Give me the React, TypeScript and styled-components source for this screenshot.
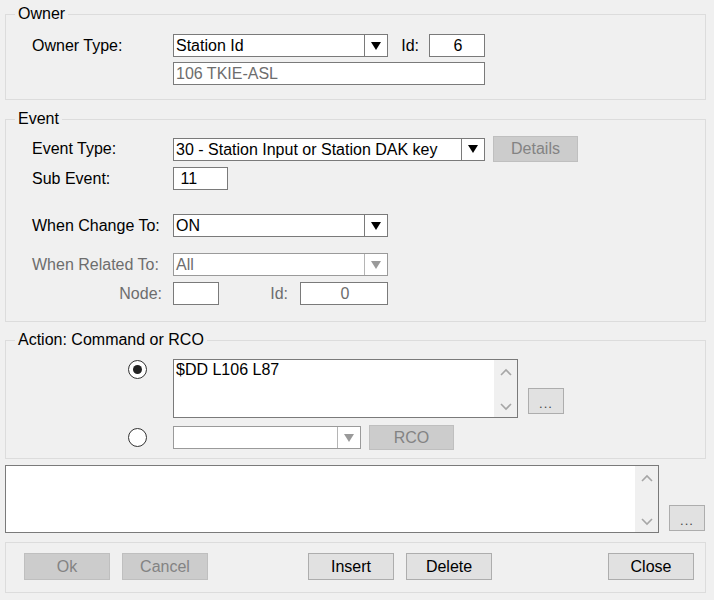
import React from "react";
import styled, { createGlobalStyle } from "styled-components";

const GlobalStyle = createGlobalStyle`
  html, body {
    margin: 0;
    background: #f0f0f0;
  }
  body {
    font-family: "Liberation Sans", Arial, sans-serif;
    font-size: 16px;
    color: #000;
  }
`;

const Window = styled.div`
  width: 701px;
  padding: 6px 0 0 5px;
  display: flex;
  flex-direction: column;
`;

const Group = styled.fieldset<{ $gap?: number }>`
  margin: ${(p) => p.$gap ?? 0}px 0 0 0;
  padding: 0;
  border: 1px solid #dcdcdc;
  min-width: 0;
`;

const GroupBody = styled.div<{ $top: number; $bottom: number }>`
  padding: ${(p) => p.$top}px 0 ${(p) => p.$bottom}px 26px;
  display: flex;
  flex-direction: column;
`;

const Legend = styled.legend`
  margin-left: 9px;
  padding: 0 3px;
  line-height: 16px;
  height: 16px;
`;

const Row = styled.div<{ $gap?: number; $align?: string }>`
  display: flex;
  align-items: ${(p) => p.$align ?? "center"};
  margin-top: ${(p) => p.$gap ?? 0}px;
`;

const Label = styled.span<{ $muted?: boolean; $right?: boolean; $width?: number }>`
  width: ${(p) => p.$width ?? 141}px;
  flex: none;
  box-sizing: border-box;
  color: ${(p) => (p.$muted ? "#6d6d6d" : "#000")};
  text-align: ${(p) => (p.$right ? "right" : "left")};
  padding-right: ${(p) => (p.$right ? 11 : 0)}px;
  white-space: nowrap;
`;

const Combo = styled.div<{ $width: number; $muted?: boolean }>`
  width: ${(p) => p.$width}px;
  height: 23px;
  box-sizing: border-box;
  border: 1px solid ${(p) => (p.$muted ? "#9a9a9a" : "#7a7a7a")};
  background: #fff;
  display: flex;
  color: ${(p) => (p.$muted ? "#6d6d6d" : "#000")};
`;

const ComboText = styled.span`
  flex: 1;
  padding-left: 2px;
  line-height: 21px;
  white-space: nowrap;
  overflow: hidden;
`;

const ComboArrow = styled.span<{ $muted?: boolean }>`
  width: 22px;
  flex: none;
  border-left: 1px solid ${(p) => (p.$muted ? "#b5b5b5" : "#7a7a7a")};
  display: flex;
  align-items: center;
  justify-content: center;
  svg {
    fill: ${(p) => (p.$muted ? "#9a9a9a" : "#000")};
  }
`;

const TextBox = styled.div<{ $width: number; $center?: boolean; $muted?: boolean }>`
  width: ${(p) => p.$width}px;
  height: 23px;
  box-sizing: border-box;
  border: 1px solid #7a7a7a;
  background: #fff;
  line-height: 21px;
  padding-left: 2px;
  text-align: ${(p) => (p.$center ? "center" : "left")};
  color: ${(p) => (p.$muted ? "#6d6d6d" : "#000")};
  flex: none;
`;

const InlineLabel = styled.span<{ $width: number; $muted?: boolean }>`
  width: ${(p) => p.$width}px;
  flex: none;
  box-sizing: border-box;
  text-align: right;
  padding-right: ${(p) => (p.$muted ? 12 : 10)}px;
  color: ${(p) => (p.$muted ? "#6d6d6d" : "#000")};
`;

const Button = styled.button<{ $width?: number; $height?: number; $left?: number }>`
  width: ${(p) => p.$width ?? 86}px;
  height: ${(p) => p.$height ?? 27}px;
  margin-left: ${(p) => p.$left ?? 0}px;
  flex: none;
  box-sizing: border-box;
  border: 1px solid #adadad;
  background: #e1e1e1;
  font-family: inherit;
  font-size: 16px;
  color: #000;
  padding: 0;
  &:disabled {
    background: #cccccc;
    border-color: #bfbfbf;
    color: #838383;
  }
`;

const DotsButton = styled(Button)<{ $bottom: number }>`
  align-self: flex-end;
  margin-bottom: ${(p) => p.$bottom}px;
  font-size: 13px;
  color: #444;
  letter-spacing: 1px;
  line-height: 14px;
  padding-top: 6px;
`;

const RadioSlot = styled.div`
  width: 141px;
  flex: none;
  display: flex;
`;

const Radio = styled.span<{ $checked?: boolean; $top?: number }>`
  width: 19px;
  height: 19px;
  box-sizing: border-box;
  margin: ${(p) => p.$top ?? 0}px 0 0 96px;
  border: 1.5px solid #333;
  border-radius: 50%;
  background: #fff;
  display: flex;
  align-items: center;
  justify-content: center;
  &::after {
    content: "";
    width: 9px;
    height: 9px;
    border-radius: 50%;
    background: ${(p) => (p.$checked ? "#222" : "transparent")};
  }
`;

const Memo = styled.div<{ $width: number; $height: number }>`
  width: ${(p) => p.$width}px;
  height: ${(p) => p.$height}px;
  box-sizing: border-box;
  border: 1px solid #7a7a7a;
  background: #fff;
  display: flex;
  flex: none;
`;

const MemoText = styled.div`
  flex: 1;
  padding: 1px 2px;
  line-height: 18px;
`;

const ScrollStrip = styled.div`
  width: 23px;
  background: #f0f0f0;
  display: flex;
  flex-direction: column;
  justify-content: space-between;
  align-items: center;
  padding: 8px 0 6px;
  svg {
    stroke: #a6a6a6;
    fill: none;
  }
`;

const MemoRow = styled.div`
  display: flex;
  margin-top: 6px;
`;

const ButtonBar = styled.div`
  margin-top: 9px;
  border: 1px solid #dcdcdc;
  padding: 10px 11px 12px 18px;
  display: flex;
  gap: 12px;
`;

const Spacer = styled.div<{ $width?: number }>`
  ${(p) => (p.$width ? `width: ${p.$width - 24}px;` : "flex: 1;")}
`;

const Arrow = () => (
  <svg width="10" height="8" viewBox="0 0 10 8">
    <polygon points="0,0 10,0 5,8" />
  </svg>
);

const DropDown = ({ width, value, muted }: { width: number; value: string; muted?: boolean }) => (
  <Combo $width={width} $muted={muted}>
    <ComboText>{value}</ComboText>
    <ComboArrow $muted={muted}>
      <Arrow />
    </ComboArrow>
  </Combo>
);

const Scroller = () => (
  <ScrollStrip>
    <svg width="12" height="8" viewBox="0 0 12 8">
      <polyline points="1,7 6,2 11,7" strokeWidth="1.6" />
    </svg>
    <svg width="12" height="8" viewBox="0 0 12 8">
      <polyline points="1,1 6,6 11,1" strokeWidth="1.6" />
    </svg>
  </ScrollStrip>
);

const App = () => {
  return (
    <>
      <GlobalStyle />
      <Window>
        <Group>
          <Legend>Owner</Legend>
          <GroupBody $top={12} $bottom={14}>
            <Row>
              <Label>Owner Type:</Label>
              <DropDown width={215} value="Station Id" />
              <InlineLabel $width={41}>Id:</InlineLabel>
              <TextBox $width={56} $center>
                6
              </TextBox>
            </Row>
            <Row $gap={5}>
              <Label />
              <TextBox $width={312} $muted>
                106 TKIE-ASL
              </TextBox>
            </Row>
          </GroupBody>
        </Group>

        <Group $gap={11}>
          <Legend>Event</Legend>
          <GroupBody $top={9} $bottom={16}>
            <Row>
              <Label>Event Type:</Label>
              <DropDown width={312} value="30 - Station Input or Station DAK key" />
              <Button $width={85} $height={26} $left={8} disabled>
                Details
              </Button>
            </Row>
            <Row $gap={5}>
              <Label>Sub Event:</Label>
              <TextBox $width={55}>&nbsp;11</TextBox>
            </Row>
            <Row $gap={24}>
              <Label>When Change To:</Label>
              <DropDown width={215} value="ON" />
            </Row>
            <Row $gap={16}>
              <Label $muted>When Related To:</Label>
              <DropDown width={215} value="All" muted />
            </Row>
            <Row $gap={6}>
              <Label $muted $right>
                Node:
              </Label>
              <TextBox $width={46} />
              <InlineLabel $width={81} $muted>
                Id:
              </InlineLabel>
              <TextBox $width={88} $center $muted>
                0
              </TextBox>
            </Row>
          </GroupBody>
        </Group>

        <Group $gap={10}>
          <Legend>Action: Command or RCO</Legend>
          <GroupBody $top={11} $bottom={8}>
            <Row $align="flex-start">
              <RadioSlot>
                <Radio $checked $top={1} />
              </RadioSlot>
              <Memo $width={345} $height={59}>
                <MemoText>$DD L106 L87</MemoText>
                <Scroller />
              </Memo>
              <DotsButton $width={36} $height={26} $left={10} $bottom={4}>
                ...
              </DotsButton>
            </Row>
            <Row $gap={7}>
              <RadioSlot>
                <Radio />
              </RadioSlot>
              <DropDown width={188} value="" muted />
              <Button $width={85} $height={25} $left={8} disabled>
                RCO
              </Button>
            </Row>
          </GroupBody>
        </Group>

        <MemoRow>
          <Memo $width={654} $height={68}>
            <MemoText />
            <Scroller />
          </Memo>
          <DotsButton $width={36} $height={26} $left={10} $bottom={2}>
            ...
          </DotsButton>
        </MemoRow>

        <ButtonBar>
          <Button disabled>Ok</Button>
          <Button disabled>Cancel</Button>
          <Spacer $width={100} />
          <Button>Insert</Button>
          <Button>Delete</Button>
          <Spacer />
          <Button>Close</Button>
        </ButtonBar>
      </Window>
    </>
  );
};

export default App;
